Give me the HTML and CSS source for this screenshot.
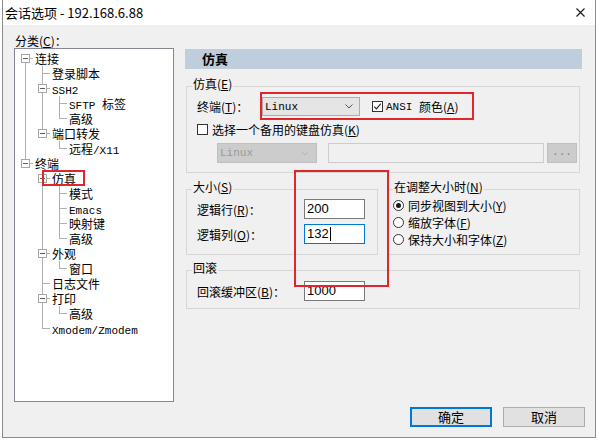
FILE: index.html
```html
<!DOCTYPE html>
<html lang="zh-CN">
<head>
    <meta charset="UTF-8">
    <meta name="viewport" content="width=device-width, initial-scale=1.0">
    <title>会话选项 - 192.168.6.88</title>
    <link rel="stylesheet" href="styles.css">
</head>
<body>
    <div class="window">
        <div class="titlebar">
            <span class="title">会话选项 - 192.168.6.88</span>
            <svg class="close" width="9" height="9" viewBox="0 0 9 9">
                <path d="M0.5 0.5L8.5 8.5M8.5 0.5L0.5 8.5" stroke="#1a1a1a" stroke-width="1.1" fill="none"/>
            </svg>
        </div>

        <div class="main">
            <div class="side">
                <div class="side-label">分类(<u>C</u>)：</div>
                <div class="tree">
                    <ul>
                        <li><span class="toggle"></span><span class="node">连接</span>
                            <ul>
                                <li><span class="node">登录脚本</span></li>
                                <li><span class="toggle"></span><span class="node"><span class="en">SSH2</span></span>
                                    <ul>
                                        <li><span class="node"><span class="en">SFTP </span>标签</span></li>
                                        <li><span class="node">高级</span></li>
                                    </ul>
                                </li>
                                <li><span class="toggle"></span><span class="node">端口转发</span>
                                    <ul>
                                        <li><span class="node">远程<span class="en">/X11</span></span></li>
                                    </ul>
                                </li>
                            </ul>
                        </li>
                        <li><span class="toggle"></span><span class="node">终端</span>
                            <ul>
                                <li><span class="toggle"></span><span class="node"><span class="mark">仿真</span></span>
                                    <ul>
                                        <li><span class="node">模式</span></li>
                                        <li><span class="node"><span class="en">Emacs</span></span></li>
                                        <li><span class="node">映射键</span></li>
                                        <li><span class="node">高级</span></li>
                                    </ul>
                                </li>
                                <li><span class="toggle"></span><span class="node">外观</span>
                                    <ul>
                                        <li><span class="node">窗口</span></li>
                                    </ul>
                                </li>
                                <li><span class="node">日志文件</span></li>
                                <li><span class="toggle"></span><span class="node">打印</span>
                                    <ul>
                                        <li><span class="node">高级</span></li>
                                    </ul>
                                </li>
                                <li><span class="node"><span class="en">Xmodem/Zmodem</span></span></li>
                            </ul>
                        </li>
                    </ul>
                </div>
            </div>

            <div class="panel">
                <div class="panel-head">仿真</div>

                <div class="group group-emu">
                    <div class="group-title">仿真(<u>E</u>)</div>
                    <div class="row row-term">
                        <span class="label-term">终端(<u>T</u>)：</span>
                        <div class="callout">
                            <div class="combo">
                                <span class="en">Linux</span>
                                <svg width="8" height="5" viewBox="0 0 8 5"><path d="M0.5 0.5L4 4L7.5 0.5" stroke="#555" fill="none"/></svg>
                            </div>
                            <div class="check">
                                <span class="box">
                                    <svg width="9" height="9" viewBox="0 0 9 9"><path d="M1.2 4.6L3.4 6.9L7.8 1.6" stroke="#222" stroke-width="1.1" fill="none"/></svg>
                                </span>
                                <span class="en">ANSI&nbsp;</span>颜色(<u>A</u>)
                            </div>
                        </div>
                    </div>
                    <div class="row row-alt">
                        <span class="box"></span>
                        <span>选择一个备用的键盘仿真(<u>K</u>)</span>
                    </div>
                    <div class="row row-keys">
                        <div class="combo combo-off">
                            <span class="en">Linux</span>
                            <svg width="8" height="5" viewBox="0 0 8 5"><path d="M0.5 0.5L4 4L7.5 0.5" stroke="#b4b4b4" fill="none"/></svg>
                        </div>
                        <div class="field-off"></div>
                        <div class="btn-more">...</div>
                    </div>
                </div>

                <div class="pair">
                    <div class="group group-size">
                        <div class="group-title">大小(<u>S</u>)</div>
                        <div class="row row-num">
                            <span class="num-label">逻辑行(<u>R</u>)：</span>
                            <div class="field">200</div>
                        </div>
                        <div class="row row-num">
                            <span class="num-label">逻辑列(<u>O</u>)：</span>
                            <div class="field field-focus">132<span class="caret"></span></div>
                        </div>
                    </div>
                    <div class="group group-resize">
                        <div class="group-title">在调整大小时(<u>N</u>)</div>
                        <div class="radio-row"><span class="radio on"></span>同步视图到大小(<u>Y</u>)</div>
                        <div class="radio-row"><span class="radio"></span>缩放字体(<u>F</u>)</div>
                        <div class="radio-row"><span class="radio"></span>保持大小和字体(<u>Z</u>)</div>
                    </div>
                </div>

                <div class="group group-scroll">
                    <div class="group-title">回滚</div>
                    <div class="row row-num">
                        <span class="num-label">回滚缓冲区(<u>B</u>)：</span>
                        <div class="field">1000</div>
                    </div>
                </div>

                <div class="callout-big"></div>
            </div>
        </div>

        <div class="footer">
            <div class="btn btn-default">确定</div>
            <div class="btn">取消</div>
        </div>
    </div>
</body>
</html>
```

FILE: styles.css
```css
body {
    margin: 0;
    background: #fff;
    font-family: "Noto Sans CJK SC", sans-serif;
    font-size: 12px;
    color: #000;
}
u {
    text-underline-offset: 1px;
}
.en {
    font-family: "Liberation Mono", monospace;
    font-size: 11px;
}

.window {
    margin-left: 2px;
    width: 594px;
    height: 438px;
    box-sizing: border-box;
    border: 1px solid #8c8c8c;
    border-top: none;
    background: #f0f0f0;
    display: flex;
    flex-direction: column;
}
.titlebar {
    height: 25px;
    flex: none;
    background: #fff;
    display: flex;
    align-items: center;
    justify-content: space-between;
    padding: 0 10px 0 2px;
}
.title {
    font-size: 13px;
    line-height: 16px;
}

.main {
    flex: 1;
    display: flex;
    gap: 11px;
    padding: 0 13px 0 11px;
}
.side {
    width: 160px;
    flex: none;
}
.side-label {
    margin-top: 9px;
    height: 14px;
    line-height: 14px;
    padding-left: 1px;
}

/* tree view */
.tree {
    height: 354px;
    box-sizing: border-box;
    border: 1px solid #828790;
    background: #fff;
    padding: 2px 0 0 3px;
}
.tree ul {
    list-style: none;
    margin: 0;
    padding: 0;
}
.tree li {
    position: relative;
    padding-left: 17px;
}
.tree li::before {
    content: "";
    position: absolute;
    left: 7px;
    top: 0;
    bottom: 0;
    border-left: 1px solid #b0b0b0;
}
.tree li:last-child::before {
    bottom: auto;
    height: 8px;
}
.tree > ul > li:first-child::before {
    top: 8px;
    height: auto;
    bottom: 0;
}
.tree li::after {
    content: "";
    position: absolute;
    left: 8px;
    top: 7px;
    width: 7px;
    border-top: 1px solid #b0b0b0;
}
.node {
    display: block;
    height: 15px;
    line-height: 15px;
    white-space: nowrap;
}
.toggle {
    position: absolute;
    left: 3px;
    top: 3px;
    width: 9px;
    height: 9px;
    box-sizing: border-box;
    border: 1px solid #a6a6a6;
    background: #fff;
    z-index: 1;
}
.toggle::after {
    content: "";
    position: absolute;
    left: 1px;
    right: 1px;
    top: 3px;
    height: 1px;
    background: #606060;
}
.mark {
    position: relative;
    display: inline-block;
    height: 15px;
}
.mark::after {
    content: "";
    position: absolute;
    left: -10px;
    right: -9px;
    top: -1px;
    bottom: 0;
    border: 2px solid #e0262b;
    z-index: 2;
}

/* right panel */
.panel {
    flex: 1;
    position: relative;
    padding-top: 24px;
}
.panel-head {
    height: 20px;
    line-height: 20px;
    background: #bfcedc;
    font-size: 13px;
    font-weight: bold;
    padding-left: 17px;
}
.group {
    border: 1px solid #d7d7d7;
    padding-left: 10px;
}
.group-title {
    display: table;
    height: 14px;
    line-height: 14px;
    margin: -10px 0 0 -5px;
    padding: 0 1px;
    background: #f0f0f0;
}
.row {
    display: flex;
    align-items: center;
}

.group-emu {
    margin: 17px 2px 0 1px;
    padding-bottom: 9px;
}
.row-term {
    margin-top: 1px;
}
.label-term {
    width: 63px;
}
.callout {
    width: 214px;
    box-sizing: border-box;
    display: flex;
    align-items: center;
    border: 2px solid #e0262b;
    padding: 3px 0 2px 0;
}
.combo {
    width: 98px;
    height: 19px;
    box-sizing: border-box;
    border: 1px solid #adadad;
    background: #e5e5e5;
    display: flex;
    align-items: center;
    justify-content: space-between;
    padding: 0 6px 0 2px;
}
.check {
    display: flex;
    align-items: center;
    margin-left: 12px;
}
.box {
    width: 11px;
    height: 11px;
    box-sizing: border-box;
    border: 1px solid #333;
    background: #fff;
    display: flex;
    align-items: center;
    justify-content: center;
    margin-right: 3px;
}
.row-alt {
    margin-top: 1px;
    height: 16px;
}
.row-alt .box {
    margin-right: 4px;
}
.row-keys {
    margin-top: 6px;
    height: 20px;
}
.combo-off {
    width: 100px;
    height: 20px;
    margin-left: 20px;
    background: #cccccc;
    border-color: #bfbfbf;
    color: #9a9a9a;
    padding-right: 7px;
}
.field-off {
    width: 216px;
    height: 20px;
    box-sizing: border-box;
    margin-left: 11px;
    border: 1px solid #cccccc;
    background: #f0f0f0;
}
.btn-more {
    width: 30px;
    height: 20px;
    box-sizing: border-box;
    margin-left: 3px;
    border: 1px solid #bfbfbf;
    background: #cccccc;
    color: #838383;
    font-family: "Liberation Mono", monospace;
    font-size: 11px;
    line-height: 16px;
    text-align: center;
}

.pair {
    display: grid;
    grid-template-columns: 1fr 1fr;
    gap: 10px;
    margin: 16px 2px 0 1px;
}
.group-size {
    padding-bottom: 10px;
}
.row-num {
    height: 20px;
    margin-top: 5px;
}
.group-size .row-num:first-of-type {
    margin-top: 4px;
}
.num-label {
    width: 107px;
}
.field {
    width: 61px;
    height: 20px;
    box-sizing: border-box;
    border: 1px solid #7a7a7a;
    background: #fff;
    font-family: "Liberation Sans", sans-serif;
    font-size: 13px;
    line-height: 18px;
    padding-left: 2px;
    display: flex;
    align-items: center;
}
.field-focus {
    border-color: #0078d7;
}
.caret {
    width: 1px;
    height: 14px;
    background: #000;
    margin-left: 1px;
}

.group-resize {
    padding-left: 4px;
}
.group-resize .group-title {
    margin-left: 0;
}
.group-resize .group-title + .radio-row {
    margin-top: 3px;
}
.radio-row {
    height: 17px;
    display: flex;
    align-items: center;
}
.radio {
    width: 11px;
    height: 11px;
    box-sizing: border-box;
    border: 1px solid #333;
    border-radius: 50%;
    background: #fff;
    margin-right: 4px;
    display: flex;
    align-items: center;
    justify-content: center;
}
.radio.on::after {
    content: "";
    width: 5px;
    height: 5px;
    border-radius: 50%;
    background: #1a1a1a;
}

.group-scroll {
    margin: 15px 2px 0 1px;
    padding-bottom: 7px;
}
.group-scroll .row-num {
    margin-top: 6px;
}

.callout-big {
    position: absolute;
    left: 109px;
    top: 145px;
    width: 95px;
    height: 117px;
    box-sizing: border-box;
    border: 2px solid #e0262b;
}

/* dialog buttons */
.footer {
    flex: none;
    display: flex;
    justify-content: flex-end;
    gap: 11px;
    padding: 0 10px 10px 0;
}
.btn {
    width: 82px;
    height: 20px;
    box-sizing: border-box;
    border: 1px solid #adadad;
    background: #e1e1e1;
    font-size: 13px;
    line-height: 18px;
    text-align: center;
}
.btn-default {
    border-color: #0078d7;
    box-shadow: inset 0 0 0 1px #0078d7;
}
```
